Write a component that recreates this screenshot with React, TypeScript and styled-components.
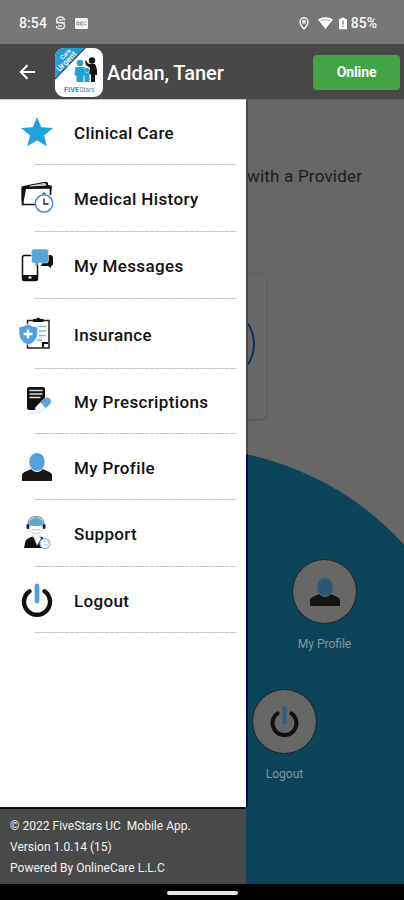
import React from 'react';
import styled, { createGlobalStyle } from 'styled-components';

const GlobalStyle = createGlobalStyle`
  * { box-sizing: border-box; }
  body { margin: 0; background: #000; font-family: Roboto, "Liberation Sans", sans-serif; }
`;

const Screen = styled.div`
  width: 404px;
  height: 900px;
  display: flex;
  flex-direction: column;
  overflow: hidden;
`;

const StatusBar = styled.div`
  height: 44px;
  flex: none;
  display: flex;
  align-items: center;
  padding: 2px 27px 0 19px;
  background: #777;
  color: #f6f6f6;
  font-size: 14px;
  font-weight: 500;
`;

const Clock = styled.span`
  width: 36px;
  letter-spacing: 0.1px;
`;

const StatusIcons = styled.div<{ $gap: number; $push?: boolean }>`
  display: flex;
  align-items: center;
  gap: ${p => p.$gap}px;
  margin-left: ${p => (p.$push ? 'auto' : '0')};
`;

const Battery = styled.span`
  display: flex;
  align-items: center;
  gap: 4px;
  margin-left: -3px;
`;

const AppBar = styled.header`
  height: 55px;
  flex: none;
  display: flex;
  align-items: center;
  padding: 1px 4px 0 19px;
  background: #484848;
  color: #fff;
`;

const BackButton = styled.button`
  width: 36px;
  height: 30px;
  padding: 0;
  border: 0;
  background: none;
  display: flex;
  align-items: center;
`;

const Title = styled.h1`
  margin: 2px 0 0 4px;
  flex: 1;
  font-size: 20px;
  font-weight: 500;
  letter-spacing: -0.05px;
  white-space: nowrap;
`;

const OnlineButton = styled.button`
  width: 87px;
  height: 35px;
  padding: 0;
  border: 0;
  border-radius: 4px;
  background: #43a447;
  color: #fff;
  font: 700 14px Roboto, sans-serif;
  letter-spacing: -0.1px;
`;

const Body = styled.div`
  flex: 1;
  min-height: 0;
  display: flex;
`;

const Drawer = styled.aside`
  width: 246px;
  flex: none;
  display: flex;
  flex-direction: column;
`;

const Menu = styled.nav`
  flex: 1;
  background: #fff;
  border-top: 1px solid #c9c9c9;
`;

const MenuItem = styled.a<{ $height: number }>`
  height: ${p => p.$height}px;
  display: grid;
  grid-template-columns: 36px 1fr;
  column-gap: 19px;
  align-items: center;
  padding-left: 19px;
  color: #111;
  font-size: 17px;
  font-weight: 500;
  letter-spacing: 0.36px;
  white-space: nowrap;
  svg { display: block; }
`;

const MenuLabel = styled.span`
  padding-top: 2px;
`;

const Divider = styled.div`
  height: 1px;
  margin: 0 10px 0 35px;
  background: repeating-linear-gradient(90deg, #c4c4c4 0 4px, #e2e2e2 4px 5px);
`;

const Footer = styled.footer`
  height: 77px;
  border-top: 2px solid #111;
  background: #494949;
  color: #f2f2f2;
  padding: 7px 10px 0;
  font-size: 12px;
  line-height: 21px;
  white-space: pre;
`;

const FooterLine = styled.div`
  letter-spacing: 0.02px;
`;

const Content = styled.main`
  position: relative;
  flex: 1;
  display: flex;
  flex-direction: column;
  overflow: hidden;
  background: #666;
  border-top: 1px solid #5b5b5b;
`;

const DrawerEdge = styled.div`
  position: absolute;
  left: 0;
  top: 0;
  width: 2px;
  height: 707px;
  background: linear-gradient(#484848 0 354px, #03035a 355px);
`;

const Disc = styled.div`
  position: absolute;
  left: -354px;
  top: 348px;
  width: 588px;
  height: 588px;
  border-radius: 50%;
  background: #0c455a;
`;

const Prompt = styled.p`
  margin: 65px 0 0 1px;
  height: 22px;
  line-height: 22px;
  font-size: 17px;
  color: #1d1d1d;
  letter-spacing: 0.2px;
  white-space: nowrap;
`;

const Card = styled.section`
  width: 20px;
  height: 143px;
  margin-top: 89px;
  border-radius: 0 6px 6px 0;
  background: #686868;
  box-shadow: 0 1px 2px #505050;
  overflow: hidden;
  display: flex;
  align-items: center;
  justify-content: flex-end;
`;

const Ring = styled.div`
  width: 76px;
  height: 76px;
  margin: 0 11px 8px 0;
  flex: none;
  border: 2.5px solid #142a58;
  border-radius: 50%;
`;

const Shortcut = styled.div<{ $left: number; $top: number }>`
  position: relative;
  width: 65px;
  margin: ${p => p.$top}px 0 0 ${p => p.$left}px;
  display: flex;
  flex-direction: column;
  align-items: center;
  gap: 12px;
  color: #8a9499;
  font-size: 12px;
  line-height: 16px;
  white-space: nowrap;
`;

const ShortcutIcon = styled.div`
  width: 65px;
  height: 65px;
  border: 1px solid #182329;
  border-radius: 50%;
  background: #666;
  display: flex;
  align-items: center;
  justify-content: center;
`;

const NavBar = styled.div`
  height: 16px;
  flex: none;
  background: #000;
  display: flex;
  justify-content: center;
  padding-top: 7px;
`;

const Handle = styled.div`
  width: 71px;
  height: 4px;
  border-radius: 2px;
  background: #e4e4e4;
`;

const StarIcon = () => (
  <svg width="36" height="36" viewBox="0 0 36 36">
    <path fill="#1fa3dc" d="M18 3l4.3 10.2 11.8.8-9 7.6 2.8 10.7L18 26.500 8.200 32.300 11 21.600 2 14l11.800-.8z" />
  </svg>
);

const HistoryIcon = () => (
  <svg width="36" height="36" viewBox="0 0 36 36" fill="none">
    <path d="M3.500 8h28v7M3.500 8v16.500h13" stroke="#111" strokeWidth="1.700" />
    <path d="M2.500 6.500L9 5l17-3.200 3 .7v2.500l4 .8-.8 6-1.200-3.700L7 9 4 25 2.500 20z" fill="#111" />
    <path d="M12 5.500l14-2.500 1.500 2.600-18 1z" fill="#fff" />
    <path d="M15 5.300l11-1.200" stroke="#888" strokeWidth=".7" />
    <circle cx="25" cy="23.500" r="8.700" fill="#fff" stroke="#388bd0" strokeWidth="1.500" />
    <path d="M23 13.800h4M25 12v3" stroke="#388bd0" strokeWidth="1.500" />
    <path d="M25 18.500v5.500h4.500" stroke="#222" strokeWidth="1.300" />
  </svg>
);

const MessagesIcon = () => (
  <svg width="36" height="36" viewBox="0 0 36 36">
    <path d="M27 8h4q3 0 3 3v5q0 3-2 3v2l-3-2h-7z" fill="#111" />
    <rect x="3.500" y="8.500" width="15" height="25" rx="2" fill="#fff" stroke="#111" strokeWidth="1.500" />
    <path d="M3 28h16v4q0 2-2 2H5q-2 0-2-2z" fill="#111" />
    <rect x="9.500" y="29.500" width="3" height="2" fill="#fff" />
    <path d="M15 2h12q2.500 0 2.500 2.500v9q0 2.500-2.500 2.500h-7l-4 4v-4h-1q-2.500 0-2.500-2.500v-9Q12.500 2 15 2z" fill="#55a4da" stroke="#fff" strokeWidth=".5" />
  </svg>
);

const InsuranceIcon = () => (
  <svg width="36" height="36" viewBox="0 0 36 36" fill="none">
    <path d="M8.500 8V4.500h21.500V32H8.500v-4" stroke="#222" strokeWidth="1.500" />
    <path d="M14 6V3h3q2.200-3 4.500 0h3v3z" fill="#111" />
    <path d="M24 31.500V27h5" stroke="#111" strokeWidth="2.200" />
    <path d="M19 10.500h8M20 15h7M20 19.500h7M18 24h5" stroke="#76b8e8" strokeWidth="1.500" />
    <path d="M8.500 8q4 3 9.500 3v6q0 8.500-9.500 12Q-.5 25.500-.5 17v-6q5 0 9-3z" fill="#4fa2df" stroke="#fff" strokeWidth=".5" transform="translate(.6 0)" />
    <path d="M9 13.500v9M4.500 18h9" stroke="#fff" strokeWidth="2.500" />
  </svg>
);

const PrescriptionIcon = () => (
  <svg width="36" height="36" viewBox="0 0 36 36" fill="none">
    <path d="M10 4h14q2 0 2 2v11l-7 10H10q-2 0-2-2V6q0-2 2-2z" fill="#111" />
    <path d="M10.500 7.500h13M10.500 11h13M10.500 14.500h11" stroke="#ddd" strokeWidth="1.700" />
    <g transform="rotate(-43 24 22)">
      <rect x="15" y="18.500" width="18" height="7.500" rx="3.700" fill="#f4f8fb" stroke="#c2d8e7" strokeWidth=".7" />
      <path d="M24 18.500h5.300a3.700 3.700 0 0 1 0 7.500H24z" fill="#5aa7de" />
    </g>
  </svg>
);

const ProfileIcon = ({ dim = false }: { dim?: boolean }) => (
  <svg width="36" height="36" viewBox="0 0 36 36">
    <path d="M3 32v-6q0-2 3-3.200l7-3 5 2.200 5-2.200 7 3q3 1.200 3 3.200v6z" fill={dim ? '#151515' : '#191717'} />
    <ellipse cx="18" cy="13" rx="8.200" ry="9.500" fill={dim ? '#2d5674' : '#559fda'} stroke={dim ? '#666' : '#fff'} strokeWidth="1" />
  </svg>
);

const SupportIcon = () => (
  <svg width="36" height="36" viewBox="0 0 36 36" fill="none">
    <path d="M5 33l1.500-7q1-2.500 7-4.500l3.500 4 4-4q5 1.500 6.500 4V33z" fill="#111" />
    <path d="M14 20.500l3 4 4-4 1 3-4 7z" fill="#fff" stroke="#999" strokeWidth=".4" />
    <path d="M10 10q0-7.500 7-7.500T24 10q0 8-7 9-7-1-7-9z" fill="#fff" stroke="#aaa" strokeWidth=".7" />
    <path d="M10 12.500q-1.500-9.500 7-9.500t7 9.500l-2-2q-5 1-10 0z" fill="#5ba4d5" />
    <path d="M9 9Q9 1.500 17 1.500T25 9" stroke="#777" />
    <rect x="7.500" y="9" width="2.500" height="5" rx="1" fill="#222" />
    <rect x="24" y="9" width="2.500" height="5" rx="1" fill="#222" />
    <path d="M13 14.500l4 .5 4-.5" stroke="#999" strokeWidth=".7" />
    <circle cx="26" cy="28.500" r="5" fill="#fff" stroke="#8ebae0" strokeWidth="1.200" />
    <path d="M24 26.500q3-3 5 0t-2 4l-2-1" stroke="#a9c9e5" />
  </svg>
);

const PowerIcon = ({ size = 36, dim = false }: { size?: number; dim?: boolean }) => (
  <svg width={size} height={size} viewBox="0 0 36 36" fill="none" strokeLinecap="round">
    <path d="M10.500 9.200a13 13 0 1 0 15 0" stroke="#111" strokeWidth="4.400" />
    <path d="M18 4v15" stroke={dim ? '#355d7b' : '#559fda'} strokeWidth="4.800" />
  </svg>
);

const BrandLogo = () => (
  <svg width="48" height="49" viewBox="0 0 48 49">
    <defs>
      <clipPath id="tile"><rect width="48" height="49" rx="9" /></clipPath>
    </defs>
    <g clipPath="url(#tile)">
      <rect width="48" height="49" fill="#fff" />
      <path d="M0 0h31L0 32z" fill="#239ed6" />
      <path d="M30 0L0 31" stroke="#333" strokeWidth="1" />
      <g fill="#fff" fontFamily="Roboto, sans-serif" fontWeight="500">
        <text transform="translate(7.500 12) rotate(-45)" fontSize="6">Care</text>
        <text transform="translate(4.500 24) rotate(-45)" fontSize="8" textLength="25">Urgent</text>
      </g>
      <g fill="#25a1d9">
        <circle cx="25" cy="15" r="3.300" />
        <path d="M20.500 19h9l1 8-2 1v6h-7v-6l-2-1z" />
        <circle cx="32" cy="22" r="2.200" />
        <path d="M29.500 24.500h5V34h-5z" />
      </g>
      <circle cx="37" cy="12.500" r="3.200" fill="#151515" />
      <path d="M35 16h5q2.500 4 2 11h-2v7h-4v-7l-2-2 1-5-4-3-1-4 1-.5 2 3z" fill="#151515" />
      <text x="9" y="43.500" fontFamily="Roboto, sans-serif" fontSize="7" fontWeight="700" fill="#2798cf" textLength="15">FIVE</text>
      <text x="24.500" y="43.500" fontFamily="Roboto, sans-serif" fontSize="6.500" fontWeight="500" fill="#7d9dab" textLength="15">Stars</text>
    </g>
  </svg>
);

const items = [
  { label: 'Clinical Care', height: 64, Icon: StarIcon },
  { label: 'Medical History', height: 66, Icon: HistoryIcon },
  { label: 'My Messages', height: 66, Icon: MessagesIcon },
  { label: 'Insurance', height: 69, Icon: InsuranceIcon },
  { label: 'My Prescriptions', height: 64, Icon: PrescriptionIcon },
  { label: 'My Profile', height: 65, Icon: ProfileIcon },
  { label: 'Support', height: 66, Icon: SupportIcon },
  { label: 'Logout', height: 65, Icon: PowerIcon },
];

export default function App() {
  return (
    <Screen>
      <GlobalStyle />
      <StatusBar>
        <Clock>8:54</Clock>
        <StatusIcons $gap={9}>
          <svg width="11" height="14" viewBox="0 0 11 14" fill="none" stroke="#e8e8e8" strokeWidth="1.500">
            <path d="M9.500 4.500Q9 1 5.500 1T1.500 4q0 2.500 4 2.700T9.500 9.500Q9.500 13 5.500 13T1.500 10M1 6.700h9M4 4h4M3 10h4" />
          </svg>
          <svg width="13" height="11" viewBox="0 0 13 11">
            <rect width="13" height="11" rx="1" fill="#f3f3f3" />
            <path d="M2 4h2v3H2zM5.500 4H8v3H5.500zM9.500 4h2M9.500 6.500h2" fill="none" stroke="#999" />
          </svg>
        </StatusIcons>
        <StatusIcons $gap={9} $push>
          <svg width="10" height="13" viewBox="0 0 10 13" fill="none" stroke="#f3f3f3" strokeWidth="1.500">
            <path d="M5 12Q1 7.500 1 4.800a4 4 0 0 1 8 0Q9 7.500 5 12z" />
            <circle cx="5" cy="4.800" r="1.200" />
          </svg>
          <svg width="15" height="12" viewBox="0 0 15 12">
            <path d="M0 2.500Q7.500-2 15 2.500L7.500 12z" fill="#fff" />
            <path d="M3 3.500q4.500-2 9 0" fill="none" stroke="#999" />
          </svg>
          <Battery>
            <svg width="8" height="13" viewBox="0 0 9 13">
              <path d="M2.500 0h4v1.500H9V13H0V1.500h2.500z" fill="#fff" />
              <path d="M4.500 3.500v4M4.500 9v1.500" stroke="#777" strokeWidth="1.500" />
            </svg>
            85%
          </Battery>
        </StatusIcons>
      </StatusBar>
      <AppBar>
        <BackButton aria-label="Back">
          <svg width="17" height="16" viewBox="0 0 17 16" fill="none" stroke="#fff" strokeWidth="2">
            <path d="M16 8H2M8.500 1.200L1.700 8l6.800 6.800" />
          </svg>
        </BackButton>
        <BrandLogo />
        <Title>Addan, Taner</Title>
        <OnlineButton>Online</OnlineButton>
      </AppBar>
      <Body>
        <Drawer>
          <Menu>
            {items.map(({ label, height, Icon }) => (
              <React.Fragment key={label}>
                <MenuItem $height={height}>
                  <Icon />
                  <MenuLabel>{label}</MenuLabel>
                </MenuItem>
                <Divider />
              </React.Fragment>
            ))}
          </Menu>
          <Footer>
            <FooterLine>© 2022 FiveStars UC  Mobile App.</FooterLine>
            <FooterLine>Version 1.0.14 (15)</FooterLine>
            <FooterLine>Powered By OnlineCare L.L.C</FooterLine>
          </Footer>
        </Drawer>
        <Content>
          <Disc />
          <Prompt>with a Provider</Prompt>
          <Card><Ring /></Card>
          <Shortcut $left={46} $top={140}>
            <ShortcutIcon><ProfileIcon dim /></ShortcutIcon>
            My Profile
          </Shortcut>
          <Shortcut $left={6} $top={37}>
            <ShortcutIcon><PowerIcon size={33} dim /></ShortcutIcon>
            Logout
          </Shortcut>
          <DrawerEdge />
        </Content>
      </Body>
      <NavBar><Handle /></NavBar>
    </Screen>
  );
}
